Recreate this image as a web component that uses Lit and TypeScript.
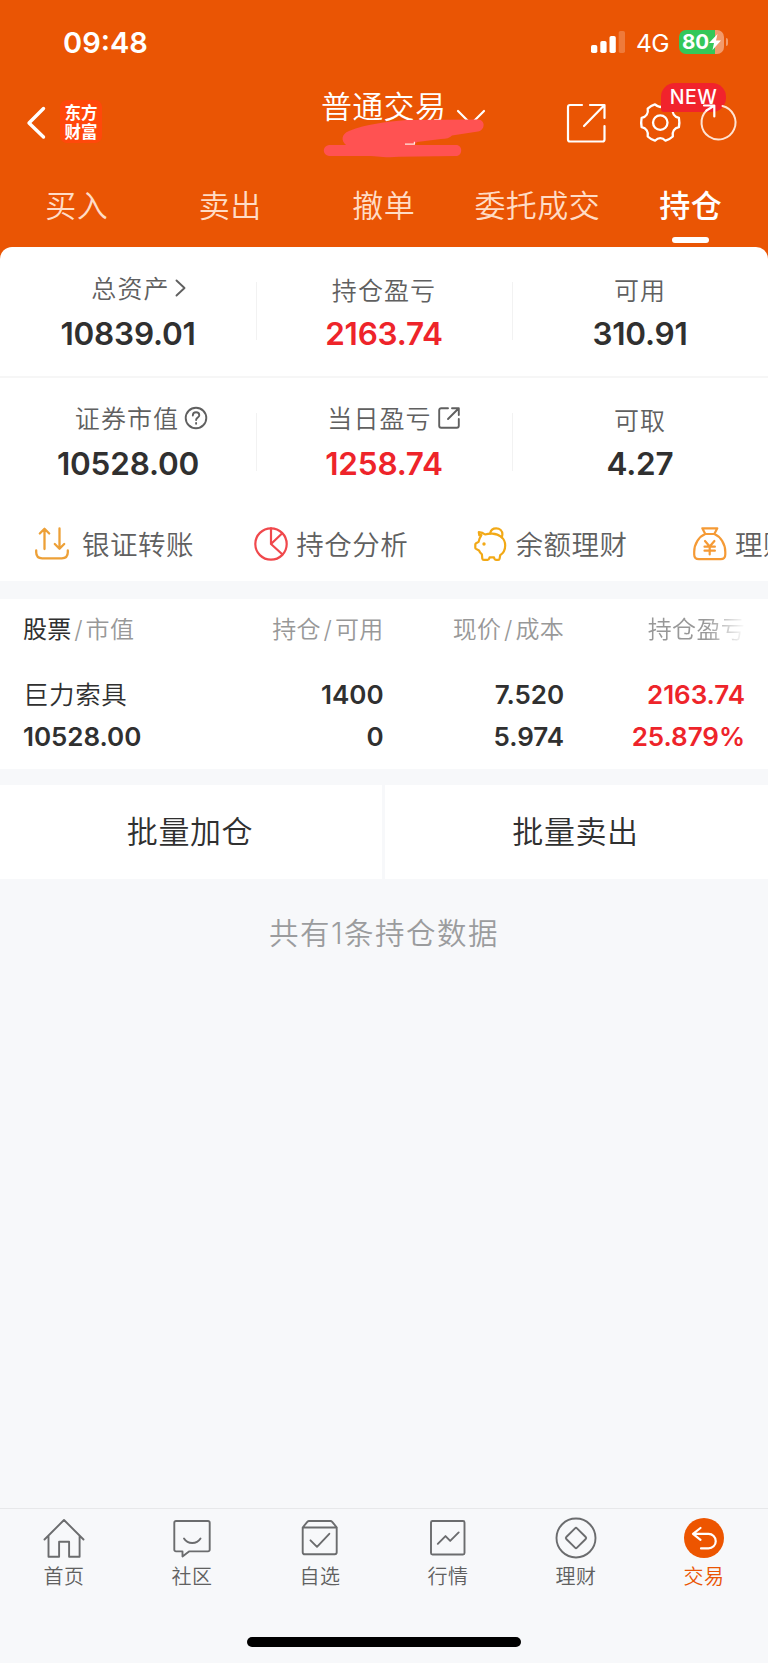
import { LitElement, html, svg, css } from "lit";
import { customElement } from "lit/decorators.js";
import { classMap } from "lit/directives/class-map.js";

interface Stat { label: string; value: string; up?: boolean; icon?: "chevron" | "help" | "share"; }

const TABS = ["买入", "卖出", "撤单", "委托成交", "持仓"];

const STATS: Stat[][] = [
  [
    { label: "总资产", value: "10839.01", icon: "chevron" },
    { label: "持仓盈亏", value: "2163.74", up: true },
    { label: "可用", value: "310.91" },
  ],
  [
    { label: "证券市值", value: "10528.00", icon: "help" },
    { label: "当日盈亏", value: "1258.74", up: true, icon: "share" },
    { label: "可取", value: "4.27" },
  ],
];

const statIcons = {
  chevron: html`<svg class="s-chevron" width="11" height="18" viewBox="0 0 11 18"><path d="M1.500 1.500l8 7.500-8 7.500" /></svg>`,
  help: html`<svg class="s-help" width="24" height="24" viewBox="0 0 24 24"><circle cx="12" cy="12" r="10.300" /><path d="M8.800 9.600c0-2 1.400-3.300 3.300-3.300s3.200 1.200 3.200 3c0 2.200-3.200 2.400-3.200 4.800" /><path d="M12.100 17v.8" /></svg>`,
  share: html`<svg class="s-share" width="22" height="22" viewBox="0 0 22 22"><path d="M10 1.200H3.200a2 2 0 0 0-2 2v15.600a2 2 0 0 0 2 2h15.600a2 2 0 0 0 2-2V12M14 1.200h6.800V8M20.500 1.500L10 12" /></svg>`,
};

const QUICK = [
  {
    label: "银证转账", cls: "transfer",
    icon: svg`<path stroke="#eda037" stroke-width="2.300" d="M9.500 22V2.500M4.800 6.500l4.700-4.700 4.700 4.700M24.500 1.500V21M19.800 17l4.700 4.700 4.700-4.700M1.200 23.500v1.800c0 3.800 2.400 6 6 6h19.600c3.600 0 6-2.200 6-6v-1.800" />`,
  },
  {
    label: "持仓分析", cls: "",
    icon: svg`<g stroke="#f0484c" stroke-width="2.200"><circle cx="17" cy="17" r="15.700" /><path d="M17 1.300V17l11.500 10.500M17 17L28 6.500" /></g>`,
  },
  {
    label: "余额理财", cls: "",
    icon: svg`<g stroke="#f2a916" stroke-width="2.200" transform="translate(-2 0)"><path d="M7.300 8.200L6.800 5.200c3 .3 5 1.300 6.300 2.300 2-.7 4.500-1 7-.9 7.500.3 13.100 4.800 13.100 11.800 0 4.600-2 7.700-5 9.800l-.6 3.400c-.1.900-.7 1.300-1.500 1.300h-2.200c-.9 0-1.400-.5-1.600-1.300l-.3-1.300h-4.400l-.4 1.300c-.2.900-.7 1.300-1.600 1.300h-3.700c-.9 0-1.500-.5-1.600-1.300l-.4-4.200c-1.300-1-2.200-2.300-2.900-3.900l-2.900-1.600c-.5-.3-.8-.7-.8-1.200v-3.200c0-.5.300-.9.800-1.200l2.500-1.400c.5-2.500 1.500-4.700 2.800-6.700z" /><path d="M18.200 6.300c.5-3 2.900-5 6-5 3.600 0 6.200 2.600 6.200 6 0 1.200-.3 2.100-.9 3" /></g><circle cx="10" cy="17" r="1.700" fill="#f2a916" />`,
  },
  {
    label: "理财", cls: "",
    icon: svg`<g stroke="#f59a35" stroke-width="2.200"><path d="M9.300 1.300h15l-3 5.700H12.300zM12.300 7C6 9.500 1.200 17 1.200 25v2.500c0 3 1.700 4.700 4.700 4.700h21.700c3 0 4.700-1.700 4.700-4.700V25c0-8-4.800-15.500-11-18" /><path d="M12 14l4.700 5.500 4.700-5.500M16.700 19.700v7.800M11.500 19.700h10.400M11.500 23.700h10.400" /></g>`,
  },
];

const NAV = [
  { label: "首页", icon: svg`<path d="M1.500 21.500L21 2l19.500 19.500M5.500 18v20.700h10.600V23.800h10v14.900h10.500V18" />` },
  { label: "社区", icon: svg`<path d="M5 3h32a1.700 1.700 0 0 1 1.700 1.700v27a1.700 1.700 0 0 1-1.700 1.700H18L11.500 38.500v-5.100H5a1.700 1.700 0 0 1-1.700-1.700v-27A1.700 1.700 0 0 1 5 3z" /><path d="M13 20.500c3.800 6 12.700 6 16.500 0" />` },
  { label: "自选", icon: svg`<path d="M3.700 9.500V34.300a2 2 0 0 0 2 2h30a2 2 0 0 0 2-2V9.500zM3.700 9.500l4.600-5.700c.5-.5 1-.8 1.700-.8h21.500c.7 0 1.200.3 1.700.8l4.600 5.700M11.500 22.300l6.500 6.500 12.300-13" />` },
  { label: "行情", icon: svg`<rect x="4" y="3" width="33.500" height="33.500" rx="1.500" /><path d="M10.800 25.800l7.700-7.700 4.700 4.800 8.500-8.500" />` },
  { label: "理财", icon: svg`<circle cx="21" cy="20" r="19.500" /><path d="M20 10.300L11.300 19q-1 1 0 2L20 29.700q1 1 2 0l8.700-8.700q1-1 0-2L22 10.300q-1-1-2 0z" />` },
  { label: "交易", active: true, icon: svg`<circle cx="21" cy="20" r="20" fill="#ed5500" stroke="none" /><path stroke="#fff" stroke-width="2.200" d="M17.500 10L10 15.900l7.500 6M10.500 15.900h15a7.200 7.200 0 0 1 0 14.500H18" />` },
];

@customElement("app-root")
export class AppRoot extends LitElement {
  static styles = css`
    :host {
      display: flex; flex-direction: column; box-sizing: border-box;
      width: 768px; height: 1663px; overflow: hidden;
      background: #f7f8fa; color: #303030;
      font-family: "Inter", "Noto Sans CJK SC", sans-serif; font-weight: 350;
    }
    * { box-sizing: border-box; }
    svg { display: block; flex: none; fill: none; overflow: visible; stroke-linejoin: round; stroke-linecap: round; }
    .top { background: #ea5504; color: #fff; height: 267px; flex: none; }
    .status { display: flex; align-items: center; height: 84px; padding: 0 40px 0 63px; }
    .clock { font-size: 29px; font-weight: 600; letter-spacing: 0; flex: 1; }
    .bars { margin: 0 11px 0 0; }
    .net { font-size: 24.500px; font-weight: 400; width: 33px; margin-right: 10px; letter-spacing: -0.5px; padding-top: 2px; }
    .battery { display: flex; align-items: center; gap: 2px; }
    .cell {
      display: flex; align-items: center; justify-content: center; width: 45px; height: 24px; border-radius: 7px;
      background: linear-gradient(90deg, #34c759 36px, #f29a6b 36px); font-size: 20.500px; font-weight: 700; line-height: 24px;
    }
    .cap { width: 2px; height: 8px; border-radius: 0 2px 2px 0; background: #f29a6b; }
    .bar { display: flex; height: 79px; position: relative; }
    .back { margin: 22px 0 0 27px; }
    .logo {
      width: 42px; height: 43px; margin: 16px 0 0 15px; border-radius: 7px; background: #ff480b;
      font-size: 16.500px; font-weight: 700; line-height: 19px; text-align: center; padding-top: 4px; white-space: nowrap;
    }
    .account { display: flex; margin-left: 219px; width: 170px; position: relative; }
    .title { font-size: 31px; letter-spacing: 0.3px; line-height: 46px; white-space: nowrap; }
    .caret { margin: 26px 0 0 11px; }
    .scribble { position: absolute; left: 1px; top: 34px; }
    .tools { display: flex; padding-top: 19px; margin-left: 75px; position: relative; }
    .gear { margin-left: 33px; }
    .reload { margin-left: 19px; position: relative; }
    .new {
      position: absolute; left: 95px; top: -1px; width: 65px; height: 29px; border-radius: 14px 14px 14px 3px;
      background: #f1232c; font-size: 19.500px; font-weight: 500; line-height: 29px; text-align: center; letter-spacing: 0.4px;
    }
    .tabs { display: grid; grid-template-columns: repeat(5, 153.500px); width: 768px; }
    .tab { display: flex; flex-direction: column; align-items: center; font-size: 31px; line-height: 44px; padding-top: 21px; letter-spacing: 0.4px; color: #ffdcc6; white-space: nowrap; }
    .tab.on { font-weight: 500; color: #fff; }
    .tab.on::after { content: ""; width: 37px; height: 6px; border-radius: 3px; background: #fff; margin-top: 9px; }
    .panel { background: #fff; border-radius: 12px 12px 0 0; margin-top: -20px; height: 334px; flex: none; overflow: hidden; }
    .stats { display: grid; grid-template-columns: repeat(3, 256px); height: 129px; }
    .stats + .stats { border-top: 2px solid #f6f6f6; height: 131px; }
    .stats + .stats .stat { padding-top: 22px; }
    .stat { display: flex; flex-direction: column; align-items: center; position: relative; padding-top: 23px; }
    .stat + .stat::before { content: ""; position: absolute; left: 0; top: 35px; height: 58px; width: 1px; background: #f2f2f2; }
    .label { display: flex; align-items: center; height: 34px; font-size: 25px; letter-spacing: 1.100px; color: #606060; }
    .label.plain { padding-top: 4px; }
    .label svg { stroke: #606060; stroke-width: 1.900; }
    .s-chevron { margin-left: 5px; margin-top: 2px; }
    .s-help { margin: 2px -4px 0 5px; }
    .label .s-share { margin: 2px -2px 0 6px; }
    .label.chevron { padding-left: 21px; }
    .label.help { padding-left: 23px; }
    .label.share { padding-left: 17px; }
    .value { font-size: 31.500px; font-weight: 600; line-height: 38px; margin-top: 11px; letter-spacing: -0.200px; }
    .up { color: #ee242a; }
    .quick { display: flex; height: 74px; padding-left: 35px; align-items: center; overflow: hidden; }
    .action { display: flex; align-items: center; width: 219.300px; flex: none; gap: 8px; font-size: 27.500px; letter-spacing: 0.500px; color: #606060; }
    .action.transfer { gap: 13px; }
    .action span { margin-top: -2px; }
    .holdings { background: #fff; height: 170px; flex: none; margin-top: 18px; }
    .row { display: grid; grid-template-columns: 180px 180.500px 180.500px 181px; padding: 0 23px 0 23px; text-align: right; }
    .row > :first-child { text-align: left; }
    .head { font-size: 24px; letter-spacing: 0.3px; line-height: 36px; color: #989898; padding-top: 13px; }
    .head b { font-weight: 400; color: #303030; }
    .slash { display: inline-block; width: 14px; text-align: center; }
    .fade { -webkit-mask-image: linear-gradient(90deg, #000 142px, transparent 182px); mask-image: linear-gradient(90deg, #000 142px, transparent 182px); }
    .line { font-size: 26px; font-weight: 600; line-height: 42px; letter-spacing: -0.050px; }
    .first { padding-top: 26px; }
    .name { font-weight: 350; font-size: 25.500px; letter-spacing: 0.6px; }
    .batch { display: grid; grid-template-columns: 382px 383px; gap: 3px; margin-top: 16px; height: 92px; flex: none; background: #f7f8fa; }
    .batch div { background: #fff; font-size: 31px; font-weight: 350; letter-spacing: 0.6px; line-height: 94px; text-align: center; padding-right: 2px; }
    .total { font-size: 29.500px; letter-spacing: 1.500px; color: #9b9c9e; text-align: center; line-height: 44px; margin-top: 34px; flex: 1; }
    .nav { display: grid; grid-template-columns: repeat(6, 128px); border-top: 1px solid #e7e8ea; height: 129px; flex: none; }
    .item { display: flex; flex-direction: column; align-items: center; padding-top: 9px; font-size: 20px; line-height: 30px; color: #606060; letter-spacing: 0.5px; }
    .item svg { stroke: #6b6c6e; stroke-width: 1.900; margin-bottom: 2px; }
    .item.on { color: #ea5504; }
    .home { width: 274px; height: 9.500px; border-radius: 5px; background: #000; margin: 0 auto 16px; flex: none; }
    .foot { height: 155px; flex: none; display: flex; flex-direction: column; }
  `;

  private stat(s: Stat) {
    return html`<div class="stat">
      <div class="label ${s.icon ?? "plain"}">${s.label}${s.icon ? statIcons[s.icon] : ""}</div>
      <div class=${classMap({ value: true, up: !!s.up })}>${s.value}</div>
    </div>`;
  }

  render() {
    const slash = html`<span class="slash">/</span>`;
    return html`
      <header class="top">
        <div class="status">
          <span class="clock">09:48</span>
          <svg class="bars" width="34" height="22" viewBox="0 0 34 22"><g fill="#fff"><rect x="0" y="14" width="6.300" height="8" rx="1.800" /><rect x="9.300" y="10" width="6.300" height="12" rx="1.800" /><rect x="18.500" y="5" width="6.300" height="17" rx="1.800" /><rect x="27.700" y="0" width="6.300" height="22" rx="1.800" opacity=".22" /></g></svg>
          <span class="net">4G</span>
          <div class="battery">
            <div class="cell">80<svg width="12" height="16" viewBox="0 0 12 16"><path fill="#fff" d="M8.500 0L0 9h5L3.500 16 12 6.500H7z" /></svg></div>
            <div class="cap"></div>
          </div>
        </div>
        <div class="bar">
          <svg class="back" width="18" height="33" viewBox="0 0 18 33"><path stroke="#fff" stroke-width="3.400" d="M16.500 2.500L2 17l14.500 14" /></svg>
          <div class="logo">东方<br />财富</div>
          <div class="account">
            <span class="title">普通交易</span>
            <svg class="caret" width="28" height="14" viewBox="0 0 28 14"><path stroke="#fff" stroke-width="2.200" d="M1 1l13 13L27 1" /></svg>
            <svg class="scribble" width="162" height="40" viewBox="0 0 162 40">
              <path fill="#ff5252" d="M7 27h17c-5-4-5-11 3-14C45 6 62 4 85 2l71-.5c8 .5 7 11 0 12l-26 4c-2 2.500-6 3.500-11 3.500L95 24l-3 3h42c7 0 7 11 0 11l-57 .8C62 40 55 38 42 38L7 38c-7-1-7-10 0-11z" />
              <path fill="#ffe9e0" d="M83 26.700h10v-3h-1.200v1.700H83z" />
            </svg>
          </div>
          <div class="tools">
            <svg width="41" height="41" viewBox="0 0 41 41"><path stroke="#fff" stroke-width="2.200" d="M16 2H4a2 2 0 0 0-2 2v32.500a2 2 0 0 0 2 2h32.500a2 2 0 0 0 2-2V23M24 2h14.500V15M38 2.500L18 23" /></svg>
            <svg class="gear" width="41" height="41" viewBox="0 0 41 41"><g stroke="#fff" stroke-width="2.400" transform="scale(.965 .93)"><path d="M15.500 1.500c3.500 3.500 7.500 3.500 11 0q4 1.200 7.500 4.500c-.8 5 1.500 9 6.300 10q1 5 0 10c-4.800 1-7.100 5-6.300 10q-3.500 3.300-7.500 4.500c-3.500-3.500-7.500-3.500-11 0q-4-1.200-7.500-4.500c.8-5-1.500-9-6.300-10q-1-5 0-10c4.800-1 7.100-5 6.300-10q3.500-3.300 7.500-4.500z" /><ellipse cx="21" cy="21" rx="7.500" ry="7.800" /></g></svg>
            <div class="new">NEW</div>
            <svg class="reload" width="37" height="41" viewBox="0 0 37 41"><path stroke="#ffe3d2" stroke-width="2" d="M22.500 3A17 17 0 1 1 6.500 7.500" /><path stroke="#fff" stroke-width="2.200" d="M4 2.500H14.300v11M6.500 7.500L14 2.800" /></svg>
          </div>
        </div>
        <nav class="tabs">${TABS.map((t, i) => html`<div class=${classMap({ tab: true, on: i === 4 })}>${t}</div>`)}</nav>
      </header>
      <section class="panel">
        ${STATS.map((r) => html`<div class="stats">${r.map((s) => this.stat(s))}</div>`)}
        <div class="quick">${QUICK.map((q) => html`<div class="action ${q.cls}"><svg width="34" height="34" viewBox="0 0 34 34">${q.icon}</svg><span>${q.label}</span></div>`)}</div>
      </section>
      <section class="holdings">
        <div class="row head">
          <span><b>股票</b>${slash}市值</span><span>持仓${slash}可用</span><span>现价${slash}成本</span><span class="fade">持仓盈亏</span>
        </div>
        <div class="row line first"><span class="name">巨力索具</span><span>1400</span><span>7.520</span><span class="up">2163.74</span></div>
        <div class="row line"><span>10528.00</span><span>0</span><span>5.974</span><span class="up">25.879%</span></div>
      </section>
      <div class="batch"><div>批量加仓</div><div>批量卖出</div></div>
      <div class="total">共有1条持仓数据</div>
      <footer class="foot">
        <nav class="nav">${NAV.map((n) => html`<div class=${classMap({ item: true, on: !!n.active })}><svg width="42" height="42" viewBox="0 0 42 42">${n.icon}</svg>${n.label}</div>`)}</nav>
        <div class="home"></div>
      </footer>
    `;
  }
}
